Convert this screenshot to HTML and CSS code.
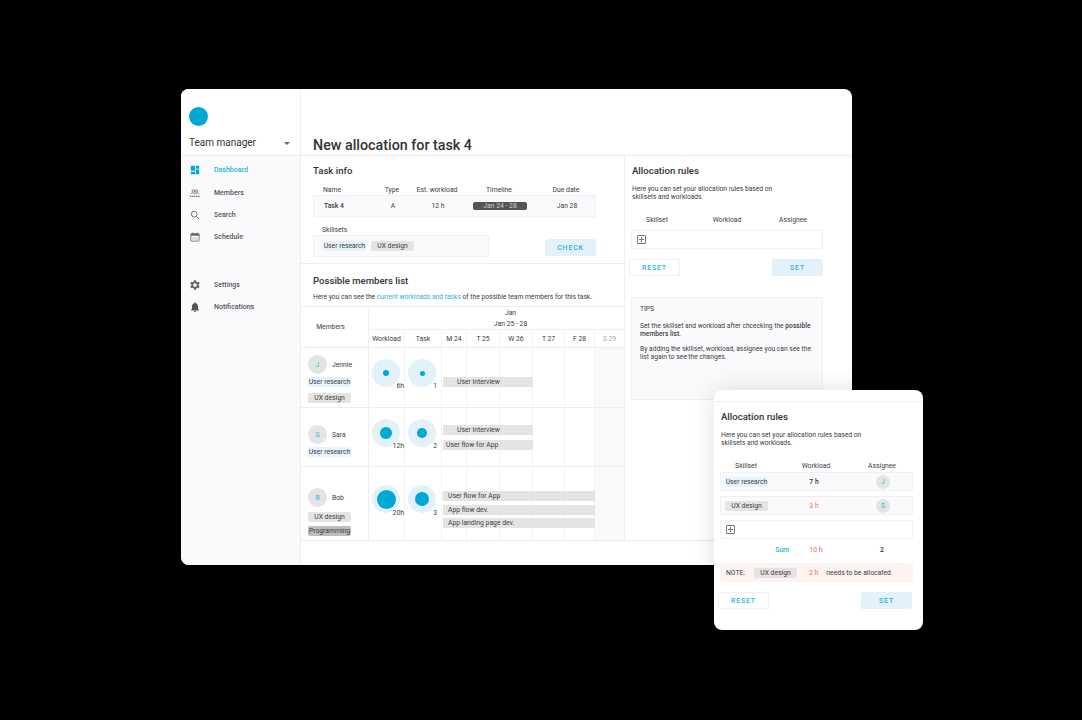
FILE: index.html
```html
<!DOCTYPE html>
<html lang="en">
<head>
  <meta charset="UTF-8" />
  <meta name="viewport" content="width=device-width, initial-scale=1.0" />
  <title>New allocation for task 4</title>
  <link rel="stylesheet" href="styles.css">
</head>
<body>
  <!-- Main window -->
  <div class="window">
    <aside class="sidebar">
      <div class="brand">
        <div class="logo"></div>
        <div class="team"><span>Team manager</span><i class="caret"></i></div>
      </div>
      <nav class="nav">
        <a class="nav-item active">
          <svg viewBox="0 0 24 24" class="icon"><path fill="#00a8d4" d="M2 2h10v12H2zM14 2h8v7h-8zM14 11h8v11h-8zM2 16h10v6H2z"/></svg>
          Dashboard
        </a>
        <a class="nav-item">
          <svg viewBox="0 0 24 24" class="icon"><g fill="none" stroke="#666" stroke-width="1.8"><circle cx="8" cy="7" r="3"/><circle cx="16" cy="7" r="3"/><path d="M3 15c0-3 2-3 5-3s4 0 4 3M12 15c0-3 1-3 4-3s5 0 5 3"/></g><path stroke="#666" stroke-width="3" stroke-dasharray="3 1.5" d="M0 20h24"/></svg>
          Members
        </a>
        <a class="nav-item">
          <svg viewBox="0 0 24 24" class="icon"><circle cx="10" cy="10" r="7" fill="none" stroke="#666" stroke-width="2"/><path d="M15 15l7 7" stroke="#666" stroke-width="2.4"/></svg>
          Search
        </a>
        <a class="nav-item">
          <svg viewBox="0 0 24 24" class="icon"><rect x="2" y="4" width="20" height="18" rx="2" fill="none" stroke="#666" stroke-width="2"/><path d="M2 4h20v5H2zM6 1h2v4H6zM16 1h2v4h-2z" fill="#666"/><path d="M5 12h14v7H5z" fill="#ddd"/></svg>
          Schedule
        </a>
      </nav>
      <nav class="nav nav-lower">
        <a class="nav-item">
          <svg viewBox="2 2 20 20" class="icon"><path fill="#666" d="M19.14 12.94c.04-.3.06-.61.06-.94 0-.32-.02-.64-.07-.94l2.03-1.58a.49.49 0 0 0 .12-.61l-1.92-3.32a.488.488 0 0 0-.59-.22l-2.39.96c-.5-.38-1.03-.7-1.62-.94l-.36-2.54a.484.484 0 0 0-.48-.41h-3.84c-.24 0-.43.17-.47.41l-.36 2.54c-.59.24-1.13.57-1.62.94l-2.39-.96c-.22-.08-.47 0-.59.22L2.74 8.87c-.12.21-.08.47.12.61l2.03 1.58c-.05.3-.09.63-.09.94s.02.64.07.94l-2.03 1.58a.49.49 0 0 0-.12.61l1.92 3.32c.12.22.37.29.59.22l2.39-.96c.5.38 1.03.7 1.62.94l.36 2.54c.05.24.24.41.48.41h3.84c.24 0 .44-.17.47-.41l.36-2.54c.59-.24 1.13-.56 1.62-.94l2.39.96c.22.08.47 0 .59-.22l1.92-3.32c.12-.22.07-.47-.12-.61l-2.01-1.58zM12 15.6c-1.98 0-3.6-1.62-3.6-3.6s1.62-3.6 3.6-3.6 3.6 1.62 3.6 3.6-1.62 3.6-3.6 3.6z"/></svg>
          Settings
        </a>
        <a class="nav-item">
          <svg viewBox="2 2 20 20" class="icon"><path fill="#555" d="M12 22c1.1 0 2-.9 2-2h-4c0 1.1.89 2 2 2zm6-6v-5c0-3.07-1.64-5.64-4.5-6.32V4c0-.83-.67-1.5-1.5-1.5s-1.5.67-1.5 1.5v.68C7.63 5.36 6 7.92 6 11v5l-2 2v1h16v-1l-2-2z"/></svg>
          Notifications
        </a>
      </nav>
    </aside>

    <main class="main">
      <header class="page-head"><h1>New allocation for task 4</h1></header>
      <div class="columns">
        <div class="left">
          <section class="task-info">
            <h2>Task info</h2>
            <div class="task-grid task-labels">
              <span class="first">Name</span><span>Type</span><span>Est. workload</span><span>Timeline</span><span>Due date</span>
            </div>
            <div class="task-grid task-values">
              <b class="first">Task 4</b><span>A</span><span>12 h</span><span><em class="timeline">Jan 24 - 28</em></span><span>Jan 28</span>
            </div>
            <div class="skill-label">Skillsets</div>
            <div class="skill-row">
              <div class="skill-box">
                <span class="tag tag-blue">User research</span>
                <span class="tag tag-grey">UX design</span>
              </div>
              <button class="btn btn-fill btn-check">CHECK</button>
            </div>
          </section>

          <section class="members-intro">
            <h2>Possible members list</h2>
            <p>Here you can see the <span class="link">current workloads and tasks</span> of the possible team members for this task.</p>
          </section>

          <div class="schedule">
            <div class="sched-row sched-head">
              <div class="members-head">Members</div>
              <div class="month">
                <div>Jan</div>
                <div>Jan 25 - 28</div>
              </div>
              <div class="day">Workload</div>
              <div class="day">Task</div>
              <div class="day">M 24</div>
              <div class="day">T 25</div>
              <div class="day">W 26</div>
              <div class="day">T 27</div>
              <div class="day">F 28</div>
              <div class="day off">S 29</div>
            </div>

            <div class="sched-row row-jennie">
              <div class="member">
                <div class="person"><span class="avatar">J</span>Jennie</div>
                <span class="tag tag-blue">User research</span>
                <span class="tag tag-grey">UX design</span>
              </div>
              <div class="metric"><div class="dot-wrap"><i class="dot dot-s"></i></div><span class="metric-val">6h</span></div>
              <div class="metric"><div class="dot-wrap"><i class="dot dot-xs"></i></div><span class="metric-val">1</span></div>
              <div class="cell"></div><div class="cell"></div><div class="cell"></div><div class="cell"></div><div class="cell"></div><div class="cell off"></div>
              <div class="bars bars-jennie">
                <div class="bar bar-3 indent">User interview</div>
              </div>
            </div>

            <div class="sched-row row-sara">
              <div class="member">
                <div class="person"><span class="avatar">S</span>Sara</div>
                <span class="tag tag-blue">User research</span>
              </div>
              <div class="metric"><div class="dot-wrap"><i class="dot dot-m"></i></div><span class="metric-val">12h</span></div>
              <div class="metric"><div class="dot-wrap"><i class="dot dot-m2"></i></div><span class="metric-val">2</span></div>
              <div class="cell"></div><div class="cell"></div><div class="cell"></div><div class="cell"></div><div class="cell"></div><div class="cell off"></div>
              <div class="bars bars-sara">
                <div class="bar bar-3 indent">User interview</div>
                <div class="bar bar-3">User flow for App</div>
              </div>
            </div>

            <div class="sched-row row-bob">
              <div class="member">
                <div class="person"><span class="avatar">B</span>Bob</div>
                <span class="tag tag-grey">UX design</span>
                <span class="tag tag-dark">Programming</span>
              </div>
              <div class="metric"><div class="dot-wrap"><i class="dot dot-l"></i></div><span class="metric-val">20h</span></div>
              <div class="metric"><div class="dot-wrap"><i class="dot dot-l2"></i></div><span class="metric-val">3</span></div>
              <div class="cell"></div><div class="cell"></div><div class="cell"></div><div class="cell"></div><div class="cell"></div><div class="cell off"></div>
              <div class="bars bars-bob">
                <div class="bar bar-5">User flow for App</div>
                <div class="bar bar-5">App flow dev.</div>
                <div class="bar bar-5">App landing page dev.</div>
              </div>
            </div>
          </div>
        </div>

        <div class="right">
          <h2>Allocation rules</h2>
          <p class="rules-desc">Here you can set your allocation rules based on<br>skillsets and workloads.</p>
          <div class="rule-grid rule-labels"><span>Skillset</span><span>Workload</span><span>Assignee</span></div>
          <div class="rule-box add-box"><i class="plus"></i></div>
          <div class="btn-row">
            <button class="btn btn-line">RESET</button>
            <button class="btn btn-fill">SET</button>
          </div>
          <div class="tips">
            <p>TIPS</p>
            <p>Set the skillset and workload after chcecking the <b>possible<br>members list.</b></p>
            <p>By adding the skillset, workload, assignee you can see the<br>list again to see the changes.</p>
          </div>
        </div>
      </div>
    </main>
  </div>

  <!-- Floating card -->
  <div class="card">
    <div class="card-top"></div>
    <h2>Allocation rules</h2>
    <p class="rules-desc">Here you can set your allocation rules based on<br>skillsets and workloads.</p>
    <div class="rule-grid rule-labels"><span>Skillset</span><span>Workload</span><span>Assignee</span></div>
    <div class="rule-box rule-grid">
      <span class="left-tag"><span class="tag tag-blue">User research</span></span>
      <span class="strong">7 h</span>
      <span><span class="avatar avatar-sm">J</span></span>
    </div>
    <div class="rule-box rule-grid">
      <span class="left-tag"><span class="tag tag-grey">UX design</span></span>
      <span class="warn">3 h</span>
      <span><span class="avatar avatar-sm">S</span></span>
    </div>
    <div class="rule-box add-box"><i class="plus"></i></div>
    <div class="rule-grid sum">
      <span class="sum-label">Sum</span>
      <span class="warn">10 h</span>
      <span class="strong">2</span>
    </div>
    <div class="note">
      <span class="note-label">NOTE:</span>
      <span class="tag tag-grey">UX design</span>
      <span class="warn note-hours">2 h</span>
      <span>needs to be allocated.</span>
    </div>
    <div class="btn-row">
      <button class="btn btn-line">RESET</button>
      <button class="btn btn-fill">SET</button>
    </div>
  </div>
</body>
</html>
```

FILE: styles.css
```css
* {
  box-sizing: border-box;
}

body {
  margin: 0;
  width: 1082px;
  height: 720px;
  position: relative;
  overflow: hidden;
  background: #000;
  color: #3c3c3c;
  font-family: Roboto, "Noto Sans", sans-serif;
  font-size: 6.8px;
  line-height: 8px;
}

h1, h2, p {
  margin: 0;
}

h2 {
  font-size: 9.6px;
  line-height: 14px;
  font-weight: 500;
  color: #333;
}

/* windows */
.window {
  position: absolute;
  left: 181px;
  top: 89px;
  width: 671px;
  height: 476px;
  display: flex;
  background: #fff;
  border-radius: 8px;
  overflow: hidden;
}

.card {
  position: absolute;
  left: 714px;
  top: 390px;
  width: 209px;
  height: 240px;
  padding: 0 10px 0 6px;
  background: #fff;
  border-radius: 8px;
  box-shadow: 0 0 24px rgba(0, 0, 0, 0.12);
}

/* sidebar */
.sidebar {
  width: 120px;
  flex: none;
  background: #fafafc;
  border-right: 1px solid #eee;
}

.brand {
  height: 67px;
  padding: 18px 8px 0 8px;
  background: #fff;
  border-bottom: 1px solid #eee;
}

.logo {
  width: 19px;
  height: 19px;
  border-radius: 50%;
  background: #00a8d4;
}

.team {
  display: flex;
  align-items: center;
  justify-content: space-between;
  margin-top: 11px;
  font-size: 10px;
  line-height: 12px;
  color: #333;
}

.caret {
  width: 0;
  height: 0;
  margin-right: 2px;
  border-left: 3px solid transparent;
  border-right: 3px solid transparent;
  border-top: 3px solid #666;
}

.nav {
  display: flex;
  flex-direction: column;
  padding: 3px 0 0 9px;
}

.nav-lower {
  margin-top: 22px;
}

.nav-item {
  display: flex;
  align-items: center;
  gap: 14px;
  height: 22.4px;
  font-size: 7px;
  font-weight: 500;
  color: #555;
}

.nav-item.active {
  color: #2ab5d8;
}

.icon {
  width: 10px;
  height: 10px;
  flex: none;
}

/* main */
.main {
  flex: 1;
  display: flex;
  flex-direction: column;
  min-width: 0;
}

.page-head {
  height: 67px;
  padding: 47px 0 0 12px;
  border-bottom: 1px solid #eee;
}

h1 {
  font-size: 14.3px;
  line-height: 19px;
  font-weight: 500;
  color: #333;
}

.columns {
  display: flex;
  height: 385px;
  border-bottom: 1px solid #e8e8e8;
}

.left {
  width: 324px;
  flex: none;
  border-right: 1px solid #eee;
}

/* task info */
.task-info {
  height: 108px;
  padding: 8px 28px 0 12px;
  border-bottom: 1px solid #eee;
}

.task-grid {
  display: grid;
  grid-template-columns: 59px 40px 50px 74px 60px;
  text-align: center;
}

.task-grid .first {
  text-align: left;
  padding-left: 10px;
}

.task-labels {
  margin-top: 5px;
  height: 12px;
  line-height: 14px;
}

.task-values {
  height: 22px;
  align-items: center;
  background: #fafafc;
  border: 1px solid #f0f0f2;
  border-radius: 2px;
}

.task-values b {
  font-weight: 500;
}

.timeline {
  display: block;
  width: 54px;
  margin: 0 auto;
  font-style: normal;
  line-height: 8px;
  border-radius: 2px;
  color: #ccc;
  background: #555;
}

.skill-label {
  margin-top: 7px;
  padding-left: 9px;
  height: 10px;
  line-height: 12px;
}

.skill-row {
  display: flex;
  align-items: flex-end;
  justify-content: space-between;
  height: 22px;
  margin-top: 1px;
}

.skill-box {
  width: 176px;
  height: 22px;
  display: flex;
  align-items: center;
  gap: 5px;
  padding-left: 9px;
  background: #fafafc;
  border: 1px solid #f0f0f2;
  border-radius: 2px;
}

.btn-check {
  margin-bottom: 1px;
}

/* tags */
.tag {
  display: inline-block;
  width: 43px;
  height: 10px;
  line-height: 10px;
  border-radius: 2px;
  text-align: center;
  white-space: nowrap;
}

.tag-blue {
  background: #e6f3fc;
}

.tag-grey {
  background: #e4e4e4;
}

.tag-dark {
  background: #bdbdbd;
}

/* buttons */
.btn {
  width: 51px;
  height: 17px;
  padding: 0;
  border-radius: 2px;
  font-family: inherit;
  font-size: 7px;
  font-weight: 500;
  letter-spacing: 0.8px;
  color: #2ab5d8;
}

.btn-fill {
  background: #e3f1fb;
  border: 1px solid #e3f1fb;
}

.btn-line {
  background: #fff;
  border: 1px solid #f0f0f2;
}

.btn-row {
  display: flex;
  justify-content: space-between;
}

/* members list */
.members-intro {
  height: 43px;
  padding: 10px 0 0 12px;
  border-bottom: 1px solid #eee;
}

.members-intro p {
  margin-top: 4px;
  font-size: 6.7px;
  line-height: 10px;
  white-space: nowrap;
}

.link {
  color: #2ab5d8;
}

/* schedule */
.sched-row {
  display: grid;
  grid-template-columns: 68px 36px 37px 25px 33px 33px 32px 30px 29px;
  border-bottom: 1px solid #eee;
}

.sched-head {
  grid-template-rows: 23px 17px;
  height: 41px;
  text-align: center;
}

.members-head {
  grid-row: 1 / span 2;
  height: 100%;
  padding-right: 8px;
  line-height: 41px;
  border-right: 1px solid #eee;
}

.month {
  grid-column: 2 / -1;
  padding: 1px 0 0 28px;
  line-height: 11px;
  border-bottom: 1px solid #eee;
}

.day {
  line-height: 19px;
  border-right: 1px solid #f3f3f3;
}

.day.off {
  color: #aaa;
  border-right: 0;
}

.row-jennie {
  height: 60px;
}

.row-sara {
  height: 59px;
}

.row-bob {
  height: 73px;
  border-bottom: 0;
}

.member {
  grid-row: 1;
  grid-column: 1;
  display: flex;
  flex-direction: column;
  align-items: flex-start;
  padding: 7px 0 0 7px;
  border-right: 1px solid #eee;
}

.member .tag {
  margin-top: 6px;
}

.member .person + .tag {
  margin-top: 3px;
}

.row-sara .member {
  padding-top: 17px;
}

.row-bob .member {
  padding-top: 21px;
}

.row-bob .member .tag {
  margin-top: 4px;
}

.row-bob .member .person + .tag {
  margin-top: 5px;
}

.person {
  display: flex;
  align-items: center;
  gap: 5px;
}

.avatar {
  width: 19px;
  height: 19px;
  flex: none;
  display: flex;
  align-items: center;
  justify-content: center;
  border-radius: 50%;
  background: #e4e4e4;
  color: #2ab5d8;
}

.avatar-sm {
  width: 14px;
  height: 14px;
  margin: 0 auto;
}

.metric {
  grid-row: 1;
  position: relative;
  border-right: 1px solid #f3f3f3;
}

.metric:nth-child(2) { grid-column: 2; }
.metric:nth-child(3) { grid-column: 3; }

.dot-wrap {
  width: 28px;
  height: 28px;
  margin: 11px 0 0 3px;
  display: flex;
  align-items: center;
  justify-content: center;
  border-radius: 50%;
  background: #e3f1fb;
}

.row-bob .dot-wrap {
  margin-top: 18px;
}

.metric-val {
  position: absolute;
  top: 34px;
  right: 0;
  line-height: 8px;
}

.metric + .metric .metric-val {
  right: 4px;
}

.row-bob .metric-val {
  top: 42px;
}

.dot {
  display: block;
  border-radius: 50%;
  background: #00a8d4;
}

.dot-xs { width: 5px; height: 5px; }
.dot-s { width: 6px; height: 6px; }
.dot-m { width: 12px; height: 12px; }
.dot-m2 { width: 10px; height: 10px; }
.dot-l { width: 19px; height: 19px; }
.dot-l2 { width: 14px; height: 14px; }

/* the bars sit over the day cells, so every cell names its own column */
.cell {
  grid-row: 1;
  border-right: 1px solid #f3f3f3;
}

.cell:nth-child(4) { grid-column: 4; }
.cell:nth-child(5) { grid-column: 5; }
.cell:nth-child(6) { grid-column: 6; }
.cell:nth-child(7) { grid-column: 7; }
.cell:nth-child(8) { grid-column: 8; }
.cell:nth-child(9) { grid-column: 9; }

.cell.off {
  background: #f8f9fb;
  border-right: 0;
}

.bars {
  grid-row: 1;
  grid-column: 4 / 9;
  display: flex;
  flex-direction: column;
  align-items: flex-start;
  padding-left: 1px;
}

.bars-jennie {
  padding-top: 29px;
}

.bars-sara {
  padding-top: 17px;
  gap: 5px;
}

.bars-bob {
  padding-top: 24px;
  gap: 3.5px;
}

.bar {
  height: 10px;
  line-height: 10px;
  padding-left: 3px;
  background: #e4e4e4;
  white-space: nowrap;
}

.bar.indent {
  padding-left: 14px;
}

.bar-3 {
  width: 90px;
}

.bar-5 {
  width: 152px;
  padding-left: 5px;
}

/* right panel */
.right {
  flex: 1;
  padding: 8px 29px 0 6px;
}

.right h2,
.right .rules-desc {
  margin-left: 1px;
}

.rules-desc {
  margin-top: 7px;
  font-size: 6.7px;
  line-height: 8px;
}

.rule-grid {
  display: grid;
  grid-template-columns: 52px 88px 44px;
  text-align: center;
  align-items: center;
}

.rule-labels {
  margin-top: 13px;
  height: 10px;
  line-height: 10px;
  padding-top: 1px;
}

.rule-box {
  height: 19px;
  margin-top: 6px;
  background: #fff;
  border: 1px solid #f0f0f2;
  border-radius: 2px;
}

.add-box {
  display: flex;
  align-items: center;
  padding-left: 5px;
}

.plus {
  display: block;
  width: 9px;
  height: 9px;
  border: 1px solid #777;
  border-radius: 1px;
  background: linear-gradient(#777, #777) center / 5px 1px no-repeat, linear-gradient(#777, #777) center / 1px 5px no-repeat;
}

.right .btn-row {
  margin: 10px 0 0 -2px;
}

.tips {
  height: 103px;
  margin-top: 21px;
  padding: 7px 8px 0;
  font-size: 6.7px;
  background: #fafafc;
  border: 1px solid #f0f0f2;
  border-radius: 2px;
}

.tips p {
  margin-bottom: 7px;
}

.tips p:first-child {
  margin-bottom: 9px;
}

.tips b {
  font-weight: 500;
}

/* floating card */
.card-top {
  height: 12px;
  margin: 0 -10px 0 -6px;
  border-bottom: 1px solid #f0f0f2;
}

.card h2 {
  margin: 8px 0 0 1px;
}

.card .rules-desc {
  margin-left: 1px;
}

.card .rule-box {
  margin-top: 5px;
  background: #fafafc;
}

.card .rule-labels + .rule-box {
  margin-top: 2px;
}

.card .add-box {
  background: #fff;
}

.left-tag {
  text-align: left;
  padding-left: 4px;
}

.strong {
  color: #333;
  font-weight: 500;
}

.warn {
  color: #f58a7c;
  font-weight: 500;
}

.rule-box .strong,
.rule-box .warn {
  margin-left: -6px;
}

.sum {
  margin-top: 6px;
  height: 10px;
}

.sum-label {
  color: #2ab5d8;
  text-align: right;
  font-weight: 500;
  margin-right: -17px;
}

.note {
  display: flex;
  align-items: center;
  height: 19px;
  margin-top: 8px;
  padding-left: 6px;
  background: #fdf3f1;
  border-radius: 2px;
}

.note-label {
  width: 28px;
}

.note-hours {
  margin: 0 8px 0 12px;
}

.card .btn-row {
  margin: 10px 1px 0 -2px;
}
```
